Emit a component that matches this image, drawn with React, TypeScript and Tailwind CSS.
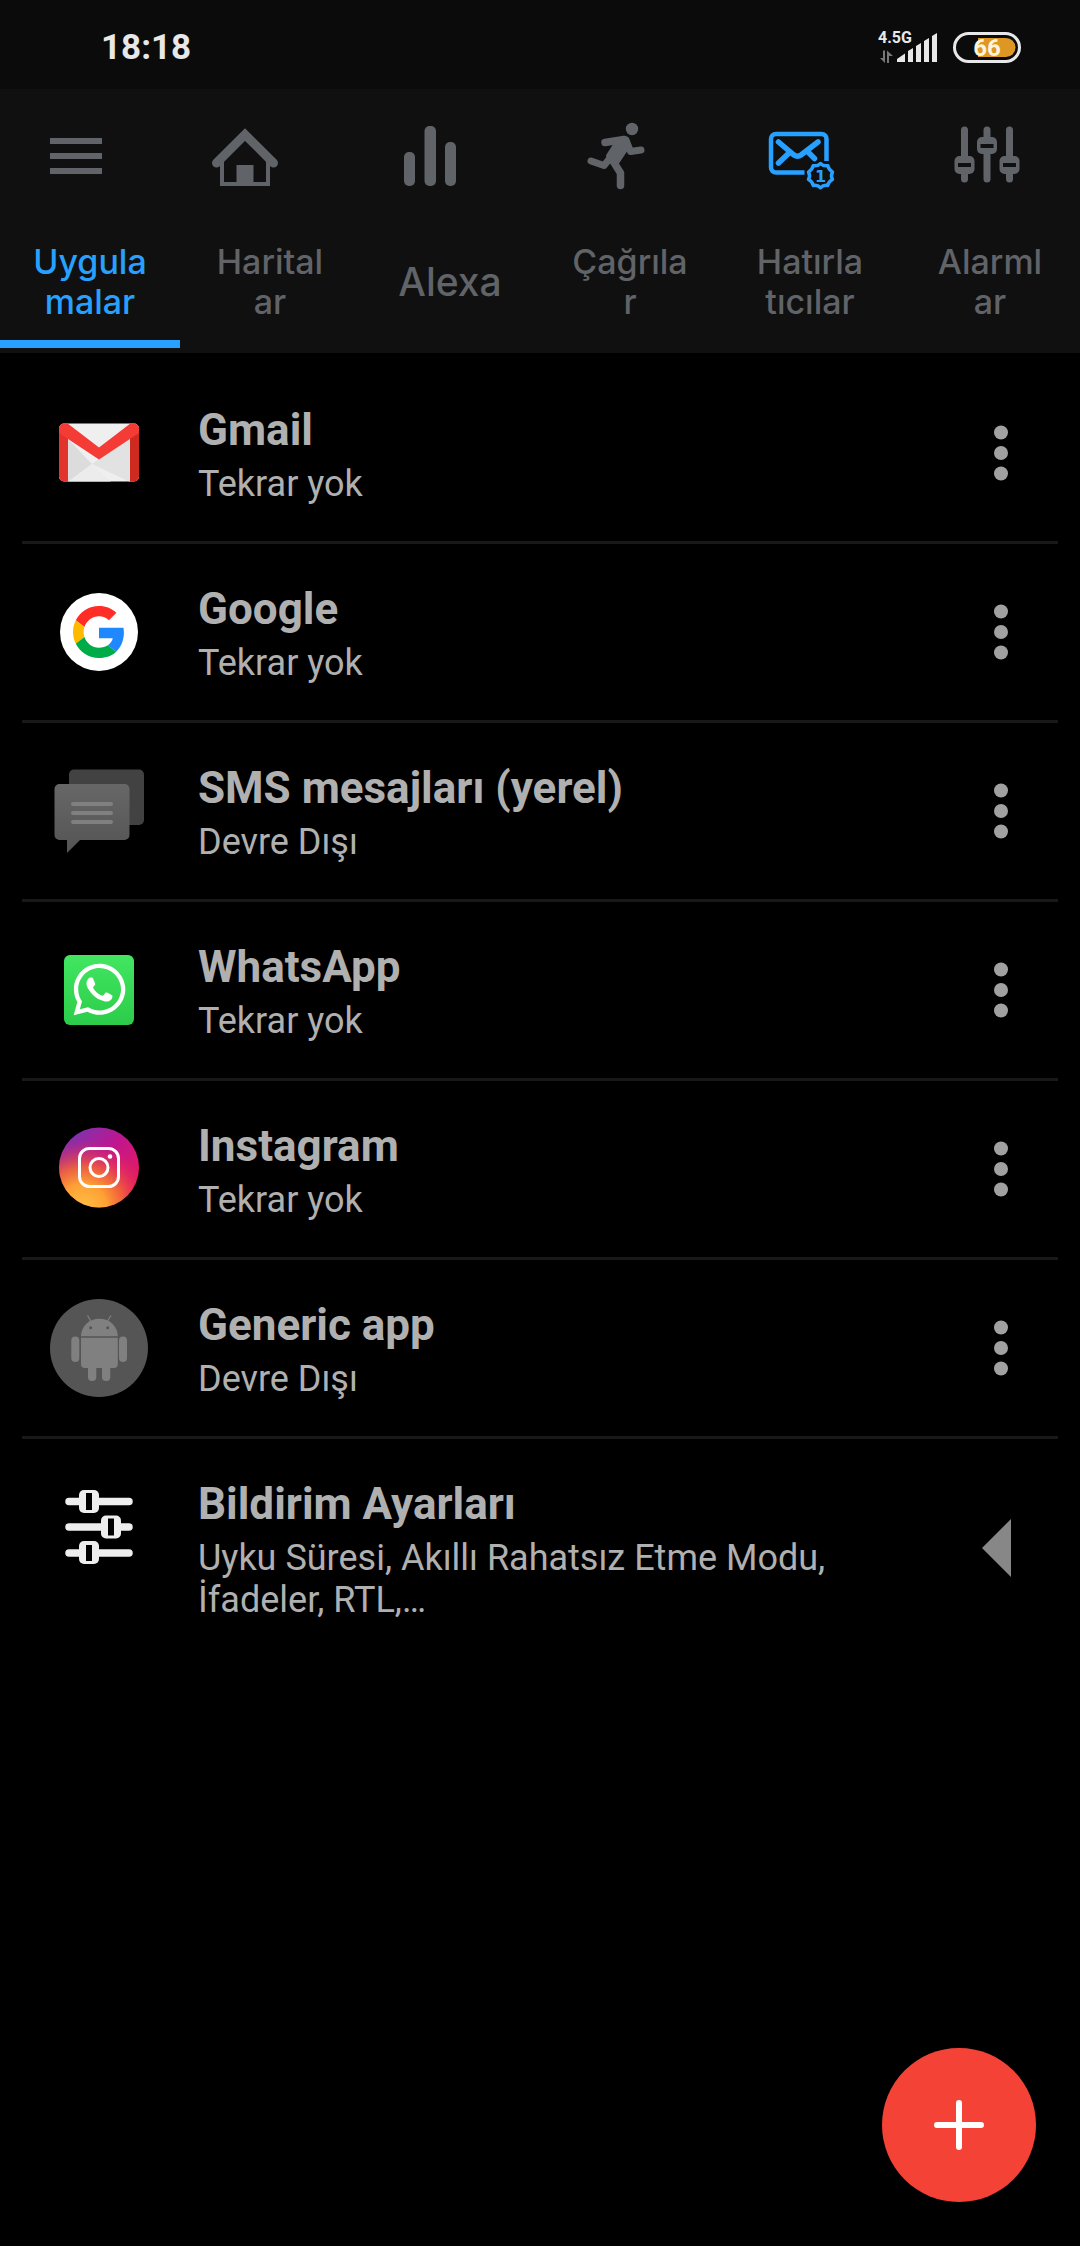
import React, { useState } from 'react';
import { FaWhatsapp } from 'react-icons/fa';

const MenuIcon: React.FC = () => (
  <svg width="52" height="36" viewBox="0 0 52 36" fill="currentColor">
    <rect width="52" height="6" />
    <rect y="15" width="52" height="6" />
    <rect y="30" width="52" height="6" />
  </svg>
);

const HomeIcon: React.FC = () => (
  <svg width="70" height="70" viewBox="0 0 70 70" fill="none" stroke="currentColor">
    <path d="M6.500 42 35 13.500 63.500 42" strokeWidth="9" strokeLinecap="round" />
    <path d="M12 38v25h46V38" strokeWidth="4" />
    <path d="M26.500 44h17v20h-17z" fill="currentColor" stroke="none" />
  </svg>
);

const StatsIcon: React.FC = () => (
  <svg width="70" height="70" viewBox="0 0 70 70" fill="currentColor">
    <rect x="9" y="31" width="11" height="34" rx="5" />
    <rect x="29.500" y="5" width="11.500" height="60" rx="5" />
    <rect x="50" y="21" width="11" height="44" rx="5" />
  </svg>
);

const RunIcon: React.FC = () => (
  <svg width="70" height="70" viewBox="41 123 70 70" fill="none" stroke="currentColor" strokeLinecap="round" strokeLinejoin="round">
    <circle cx="92" cy="131" r="6.200" fill="currentColor" stroke="none" />
    <path d="M65 144.500 84 141.500" strokeWidth="7.500" />
    <path d="M86 142 90.500 153.500 101 152" strokeWidth="7" />
    <path d="M78 144 86 142 87 148 77 163 70 162 69 158z" fill="currentColor" strokeWidth="6" />
    <path d="M51 163 64 167.500 71 159" strokeWidth="7" />
    <path d="M73 163 80.500 175V187.500" strokeWidth="7.500" />
  </svg>
);

const MailIcon: React.FC = () => (
  <svg width="70" height="70" viewBox="226 123 70 70" fill="none" stroke="currentColor" strokeWidth="4.500">
    <path d="M285.500 163V141a5 5 0 0 0-5-5H235a5 5 0 0 0-5 5v28.500a5 5 0 0 0 5 5h28.500" />
    <path d="M237.500 144 253 157q3.500 2.500 7 0L277 144M237.500 165 248 155M273.500 160.500 268 155" strokeWidth="5.500" strokeLinecap="round" />
    <path
      d="M279.500 165.500q3 3 7.300 2.200 1 4.300 4.700 6.300-2 3.800 0 7.500-4 1.800-4.700 6-4.300-.8-7.300 2.200-3-3-7.300-2.200-.8-4.200-4.700-6 2-3.700 0-7.500 3.700-2 4.700-6.300 4.300.8 7.300-2.200z"
      strokeWidth="3.500"
      strokeLinejoin="round"
    />
    <text x="279.500" y="183.500" textAnchor="middle" fontSize="16" fontWeight="700" fontFamily="DejaVu Sans, sans-serif" fill="currentColor" stroke="none">
      1
    </text>
  </svg>
);

const MixerIcon: React.FC = () => (
  <svg width="70" height="70" viewBox="0 0 70 70" fill="currentColor">
    <path d="M12.500 9v49M35 9v49M57.500 9v49" stroke="currentColor" strokeWidth="7" strokeLinecap="round" />
    <rect x="2.500" y="35" width="20" height="18" rx="5" />
    <rect x="25" y="16" width="20" height="17" rx="5" />
    <rect x="47.500" y="35" width="20" height="18" rx="5" />
    <path d="M6 42h13v4H6zM28.500 23h13v4h-13zM51 42h13v4H51z" fill="#101010" />
  </svg>
);

const GmailIcon: React.FC = () => (
  <svg width="100" height="100" viewBox="0 0 100 100">
    <defs>
      <clipPath id="gmail-clip">
        <rect x="10" y="20.500" width="80" height="58" rx="5" />
      </clipPath>
    </defs>
    <g clipPath="url(#gmail-clip)">
      <rect x="10" y="20" width="80" height="59" fill="#efefef" />
      <path d="M19 36 43 61 19 79z" fill="#dcdcdc" />
      <path d="M43 61 81 79V36L50 56z" fill="#e2e2e2" />
      <path d="M19 79 43 61 62 79z" fill="#ececec" />
      <path d="M10 24h9v56h-9z" fill="#e2332c" />
      <path d="M81 24h9v56h-9z" fill="#cf2a20" />
      <path d="M10 20h8L50 44.500 82 20h8v10L50 56.500 10 30z" fill="#f43b36" />
    </g>
  </svg>
);

const GoogleIcon: React.FC = () => (
  <svg width="100" height="100" viewBox="0 0 100 100">
    <circle cx="50" cy="50" r="39" fill="#fff" />
    <svg x="24" y="24" width="52" height="52" viewBox="0 0 48 48">
      <path fill="#ff2d25" d="M24 9.500c3.540 0 6.710 1.220 9.210 3.600l6.850-6.850C35.900 2.380 30.470 0 24 0 14.620 0 6.510 5.380 2.560 13.220l7.980 6.190C12.430 13.720 17.740 9.500 24 9.500z" />
      <path fill="#2088ff" d="M46.980 24.550c0-1.570-.15-3.090-.38-4.550H24v9.800h12.700c-.58 2.700-2.020 4.700-4.540 6.400l7.730 6c4.510-4.180 7.090-10.360 7.090-17.650z" />
      <path fill="#ffba00" d="M10.530 28.590c-.48-1.450-.76-2.990-.76-4.590s.27-3.140.76-4.590l-7.980-6.190C.92 16.460 0 20.120 0 24c0 3.880.92 7.540 2.560 10.780l7.970-6.190z" />
      <path fill="#00ac47" d="M24 48c6.480 0 11.930-2.130 15.890-5.810l-7.730-6c-2.150 1.450-4.920 2.300-8.160 2.300-6.260 0-11.570-4.220-13.470-9.910l-7.980 6.190C6.510 42.620 14.620 48 24 48z" />
    </svg>
  </svg>
);

const SmsIcon: React.FC = () => (
  <svg width="100" height="100" viewBox="0 0 100 100">
    <defs>
      <linearGradient id="sms-front" x1="0" y1="0" x2="0" y2="1">
        <stop offset="0" stopColor="#676767" />
        <stop offset="1" stopColor="#545454" />
      </linearGradient>
    </defs>
    <rect x="20" y="8.500" width="75" height="55.500" rx="5" fill="#424242" />
    <path d="M10.500 23h65a5 5 0 0 1 5 5v46a5 5 0 0 1-5 5H31L18 92V79h-7.500a5 5 0 0 1-5-5V28a5 5 0 0 1 5-5z" fill="url(#sms-front)" />
    <path d="M24 43h38M24 52h38M24 61h38" stroke="#808080" strokeWidth="4" strokeLinecap="round" />
  </svg>
);

const WhatsAppIcon: React.FC = () => (
  <svg width="100" height="100" viewBox="0 0 100 100">
    <defs>
      <linearGradient id="wa-bg" x1="0" y1="0" x2="0" y2="1">
        <stop offset="0" stopColor="#42e661" />
        <stop offset="1" stopColor="#2bcc49" />
      </linearGradient>
    </defs>
    <rect x="15" y="15" width="70" height="70" rx="6" fill="url(#wa-bg)" />
    <FaWhatsapp x="21" y="20" size={59} color="#fff" />
  </svg>
);

const InstagramIcon: React.FC = () => (
  <svg width="100" height="100" viewBox="0 0 100 100" fill="none" stroke="#fff">
    <defs>
      <linearGradient id="ig-base" x1="0.200" y1="0" x2="0.900" y2="0.700">
        <stop offset="0" stopColor="#7a35b0" />
        <stop offset="0.500" stopColor="#c0158f" />
        <stop offset="1" stopColor="#e31b62" />
      </linearGradient>
      <radialGradient id="ig-warm" cx="0.300" cy="1" r="0.850">
        <stop offset="0" stopColor="#ffc043" />
        <stop offset="0.350" stopColor="#fea035" />
        <stop offset="0.600" stopColor="#f46a35" stopOpacity="0.850" />
        <stop offset="1" stopColor="#e0205f" stopOpacity="0" />
      </radialGradient>
    </defs>
    <circle cx="50" cy="48.500" r="40" fill="url(#ig-base)" stroke="none" />
    <circle cx="50" cy="48.500" r="40" fill="url(#ig-warm)" stroke="none" />
    <rect x="30.500" y="29.500" width="39" height="38" rx="10" strokeWidth="3" />
    <circle cx="50" cy="48.500" r="9" strokeWidth="3" />
    <circle cx="61" cy="37.500" r="2.300" fill="#fff" stroke="none" />
  </svg>
);

const AndroidIcon: React.FC = () => (
  <svg width="100" height="100" viewBox="0 0 100 100" fill="#808080">
    <circle cx="50" cy="50" r="49" fill="#555" />
    <path d="M32 38.200a18.400 17.500 0 0 1 36.800 0z" />
    <path d="M38.500 17.500 41.700 23M62 17.500 58.500 23" stroke="#808080" strokeWidth="1.200" />
    <path d="M32 39.700h36.800V66a4 4 0 0 1-4 4H36a4 4 0 0 1-4-4z" />
    <rect x="22.300" y="38.500" width="8" height="25.500" rx="4" />
    <rect x="70" y="38.500" width="8" height="25.500" rx="4" />
    <rect x="39" y="62" width="8.300" height="21" rx="4" />
    <rect x="53" y="62" width="8.300" height="21" rx="4" />
    <circle cx="41.700" cy="29.700" r="1.500" fill="#555" />
    <circle cx="58.700" cy="29.700" r="1.500" fill="#555" />
  </svg>
);

const SettingsIcon: React.FC = () => (
  <svg width="100" height="100" viewBox="0 0 100 100" fill="#eee">
    <path d="M20 24.500h60M20 50h60M20 76h60" stroke="#eee" strokeWidth="7.500" strokeLinecap="round" />
    <rect x="30" y="13" width="20" height="23" rx="5" />
    <rect x="52" y="38.500" width="20" height="23" rx="5" />
    <rect x="30" y="64" width="20" height="23" rx="5" />
    <path d="M37 16h6v17h-6zM59 41.500h6v17h-6zM37 68h6v16h-6z" fill="#000" />
  </svg>
);

const StatusBar: React.FC = () => (
  <div className="flex h-[89px] items-center justify-between bg-[#0b0b0b] pt-[6px] pr-[59px] pl-[101px] text-[#e8e8e8]">
    <span className="pt-[2px] text-[35px] font-bold">18:18</span>
    <div className="flex items-center gap-[16px]">
      <svg width="62" height="50" viewBox="875 22 62 50" fill="currentColor">
        <text x="878" y="42" fontSize="16" fontWeight="700" fontFamily="Roboto, sans-serif">
          4.5G
        </text>
        <path d="M883 49.500h2V62l-5-5h3zM889 62h-2V49.500l6 5.500h-4z" fill="#777" />
        <path d="M897 61v-3l8-5.500V61zM908 61V50l5-3v14zM916 61V45l5-3v19zM924 61V40l5-3v24zM932 61V35l5-3v29z" />
      </svg>
      <svg width="68" height="31" viewBox="0 0 68 31">
        <rect x="1.500" y="1.500" width="65" height="28" rx="14" fill="none" stroke="#e8e8e8" strokeWidth="3" />
        <path d="M25 6h28a9 9 0 0 1 0 19H25z" fill="#dd9723" />
        <text x="34" y="24" textAnchor="middle" fontSize="24" fontWeight="700" fontFamily="Roboto, sans-serif" fill="#fff3dc">
          66
        </text>
      </svg>
    </div>
  </div>
);

const sections = [
  { name: 'Ana Sayfa', icon: <HomeIcon /> },
  { name: 'İstatistikler', icon: <StatsIcon /> },
  { name: 'Etkinlik', icon: <RunIcon /> },
  { name: 'Bildirimler', icon: <MailIcon /> },
  { name: 'Araçlar', icon: <MixerIcon /> },
];

const tabs = ['Uygulamalar', 'Haritalar', 'Alexa', 'Çağrılar', 'Hatırlatıcılar', 'Alarmlar'];

const apps = [
  { name: 'Gmail', detail: 'Tekrar yok', icon: <GmailIcon /> },
  { name: 'Google', detail: 'Tekrar yok', icon: <GoogleIcon /> },
  { name: 'SMS mesajları (yerel)', detail: 'Devre Dışı', icon: <SmsIcon /> },
  { name: 'WhatsApp', detail: 'Tekrar yok', icon: <WhatsAppIcon /> },
  { name: 'Instagram', detail: 'Tekrar yok', icon: <InstagramIcon /> },
  { name: 'Generic app', detail: 'Devre Dışı', icon: <AndroidIcon /> },
];

interface RowProps {
  icon: React.ReactNode;
  name: string;
  detail: string;
  action: React.ReactNode;
}

const Row: React.FC<RowProps> = ({ icon, name, detail, action }) => (
  <li className="mx-[22px] flex border-b-[3px] border-[#181818] last:border-b-0">
    <div className="flex h-[176px] w-[154px] shrink-0 items-center justify-center">{icon}</div>
    <div className="min-w-0 flex-1 pt-[39px] pb-[36px] pl-[22px]">
      <h2 className="text-[44px] leading-[52px] font-bold">{name}</h2>
      <p className="mt-[7px] text-[36px] leading-[42px]">{detail}</p>
    </div>
    {action}
  </li>
);

export default function App() {
  const [section, setSection] = useState('Bildirimler');
  const [tab, setTab] = useState('Uygulamalar');

  return (
    <div lang="tr" className="min-h-screen bg-black font-['Roboto',sans-serif] text-[#b0b0b0]">
      <header className="bg-[#101010] text-[#606368]">
        <StatusBar />
        <nav className="flex h-[134px] items-center">
          <button aria-label="Menü" className="flex w-[152px] justify-center">
            <MenuIcon />
          </button>
          <div className="flex flex-1">
            {sections.map(s => (
              <button
                key={s.name}
                aria-label={s.name}
                onClick={() => setSection(s.name)}
                className={`flex flex-1 justify-center ${s.name === section ? 'text-[#27a0ff]' : ''}`}
              >
                {s.icon}
              </button>
            ))}
          </div>
        </nav>
        <div role="tablist" className="grid grid-cols-6 pb-[5px] font-['Inter',sans-serif] font-medium">
          {tabs.map(name => (
            <button
              key={name}
              role="tab"
              aria-selected={name === tab}
              onClick={() => setTab(name)}
              className={`flex h-[125px] items-center justify-center border-b-8 ${name === tab ? 'border-[#27a0ff] text-[#27a0ff]' : 'border-transparent'}`}
            >
              <span className={`w-[116px] leading-[40px] break-all ${name.length > 6 ? 'text-[34px]' : 'text-[39px]'}`}>{name}</span>
            </button>
          ))}
        </div>
      </header>

      <ul className="pt-[12px]">
        {apps.map(app => (
          <Row
            key={app.name}
            icon={app.icon}
            name={app.name}
            detail={app.detail}
            action={
              <button aria-label={`${app.name} seçenekleri`} className="flex w-[115px] items-center justify-center">
                <svg width="14" height="56" viewBox="0 0 14 56" fill="#a1a1a1">
                  <circle cx="7" cy="7.500" r="7" />
                  <circle cx="7" cy="28" r="7" />
                  <circle cx="7" cy="48.500" r="7" />
                </svg>
              </button>
            }
          />
        ))}
        <Row
          icon={<SettingsIcon />}
          name="Bildirim Ayarları"
          detail="Uyku Süresi, Akıllı Rahatsız Etme Modu, İfadeler, RTL,…"
          action={
            <button aria-label="Genişlet" className="flex w-[115px] items-center justify-center">
              <svg width="38" height="58" viewBox="0 0 38 58">
                <path d="M0 29 29 0V58z" fill="#878787" />
              </svg>
            </button>
          }
        />
      </ul>

      <button aria-label="Ekle" className="fixed right-[44px] bottom-[44px] flex size-[154px] items-center justify-center rounded-full bg-[#f44336]">
        <svg width="50" height="50" viewBox="0 0 50 50" stroke="#fff" strokeWidth="6" strokeLinecap="round">
          <path d="M25 3v44M3 25h44" />
        </svg>
      </button>
    </div>
  );
}
